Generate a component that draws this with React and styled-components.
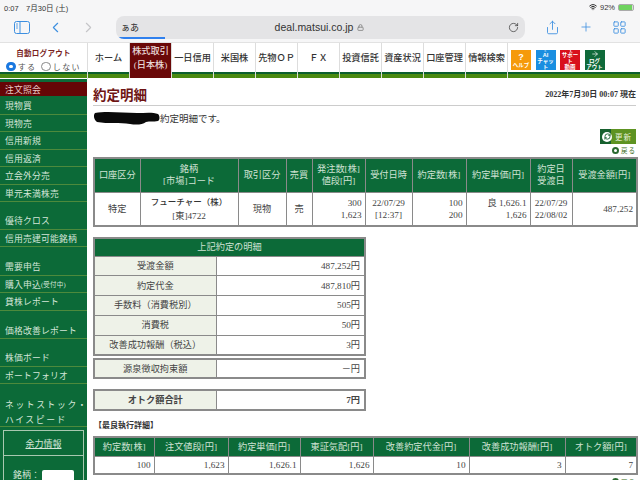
import React from 'react'
import styled, {createGlobalStyle} from 'styled-components'
import {ChevronLeft, ChevronRight, Share, Plus, RotateCw, LayoutGrid, Lock, Wifi, Bot, Play, ArrowRight, RefreshCw} from 'lucide-react'

const SERIF = `"Liberation Serif", "Noto Sans CJK JP", serif`
const SANS = `"Liberation Sans", "Noto Sans CJK JP", sans-serif`

const Global = createGlobalStyle`
  html, body { margin: 0; padding: 0; background: #fff; overflow: hidden; }
  #root { width: 640px; height: 480px; overflow: hidden; }
  * { box-sizing: border-box; }
`
const Screen = styled.div`
  width: 640px;
  height: 480px;
  overflow: hidden;
  display: flex;
  flex-direction: column;
  font-family: ${SERIF};
  color: #333;
`
// browser chrome
const Chrome = styled.div`
  height: 43px;
  flex: none;
  background: #f6f6f7;
  border-bottom: 1px solid #e2e2e2;
  position: relative;
`
const StatusBar = styled.div`
  height: 13px;
  padding: 1px 6px 0 4px;
  display: flex;
  justify-content: space-between;
  align-items: center;
  font: 7.5px ${SANS};
  color: #333;
`
const StatusRight = styled.div`
  display: flex;
  align-items: center;
  gap: 3px;
`
const Battery = styled.span`
  width: 16px;
  height: 7px;
  border-radius: 2px;
  background: linear-gradient(90deg, #6fd35f 92%, #ddd 92%);
  border: 1px solid #aaa;
`
const Toolbar = styled.div`
  height: 24px;
  margin-top: 2px;
  display: flex;
  align-items: center;
`
const ToolIcon = styled.div`
  width: ${props => props.$w}px;
  flex: none;
  display: flex;
  justify-content: center;
  color: ${props => props.$off ? '#c5c5c8' : '#3d8fe0'};
`
const UrlBar = styled.div`
  width: 409px;
  height: 23px;
  flex: none;
  background: #e4e4e6;
  border-radius: 8px;
  margin-left: 6px;
  display: flex;
  align-items: center;
  padding: 0 6px 0 5px;
  position: relative;
  overflow: hidden;
  font: 9px ${SANS};
  color: #222;
`
const UrlText = styled.span`
  flex: 1;
  text-align: center;
  font-size: 10.5px;
  color: #333;
  padding-right: 8px;
  display: flex;
  justify-content: center;
  align-items: center;
  gap: 4px;
`
const Progress = styled.div`
  position: absolute;
  left: 0;
  bottom: 0;
  width: 49px;
  height: 1.5px;
  background: #2f80ee;
`
// site nav
const Nav = styled.div`
  height: 36px;
  flex: none;
  display: flex;
  background: linear-gradient(#fff 0 29px, #0c5f2e 29px 31px, #4a8a10 31px 35px, #fff 35px);
`
const Logout = styled.div`
  width: 88px;
  padding-top: 6px;
  text-align: center;
  border-right: 1px solid #ddd;
`
const LogoutTitle = styled.div`
  font-size: 7.5px;
  font-weight: bold;
  color: #7a1f1f;
  line-height: 9px;
  letter-spacing: .3px;
`
const RadioRow = styled.div`
  display: flex;
  align-items: center;
  justify-content: center;
  gap: 2px;
  margin-top: 3px;
  font-size: 8px;
  color: #555;
  letter-spacing: 1.3px;
`
const Radio = styled.span`
  width: 9.5px;
  height: 9.5px;
  border-radius: 50%;
  background: #fff;
  border: ${props => props.$on ? '3px solid #1a78e0' : '1px solid #888'};
  margin-left: ${props => props.$on ? 0 : 3}px;
`
const NavItem = styled.div`
  width: 42px;
  height: 35px;
  padding: 0 0 6px;
  border-right: 1px solid #ddd;
  display: flex;
  align-items: center;
  justify-content: center;
  text-align: center;
  white-space: nowrap;
  font-size: 9.2px;
  font-weight: 500;
  line-height: 14px;
  color: ${props => props.$active ? '#e8d8d8' : '#333'};
  background: ${props => props.$active ? '#6a0808' : 'transparent'};
`
const MiniButtons = styled.div`
  display: flex;
  gap: 4.5px;
  padding: 7px 0 0 3px;
`
const MiniButton = styled.div`
  width: 20px;
  height: 20px;
  background: ${props => props.$bg};
  color: #fff;
  font: bold 5.5px/6px ${SANS};
  text-align: center;
  display: flex;
  flex-direction: column;
  align-items: center;
  justify-content: center;
`
const HelpMark = styled.span`
  font-size: 9px;
  line-height: 9px;
`
const Body = styled.div`
  flex: 1;
  display: flex;
  min-height: 0;
`
// sidebar
const Side = styled.div`
  width: 87px;
  flex: none;
  background: #0c6a38;
  padding-top: 3px;
`
const SideItem = styled.div`
  height: ${props => props.$h || 17.5}px;
  padding-left: 5px;
  margin-bottom: ${props => props.$gap || 0}px;
  display: flex;
  align-items: center;
  font-size: 8.8px;
  white-space: nowrap;
  letter-spacing: ${props => props.$wide ? 1.6 : .2}px;
  color: ${props => props.$active ? '#e8c8c8' : '#d4e6d8'};
  background: ${props => props.$active ? '#650606' : 'transparent'};
  box-shadow: ${props => props.$plain ? 'none' : 'inset 0 -1px 0 #4d8a3c'};
`
const SmallNote = styled.span`
  font-size: 6.5px;
`
const SideBox = styled.div`
  margin: 3px 3px 0;
  border: 1px solid #a8c8b0;
  color: #d4e6d8;
  font-size: 9px;
`
const SideBoxTitle = styled.div`
  height: 25px;
  display: flex;
  align-items: center;
  justify-content: center;
  text-decoration: underline;
  border-bottom: 1px solid #a8c8b0;
`
const SideBoxRow = styled.div`
  display: flex;
  align-items: flex-start;
  gap: 2px;
  padding: 14px 0 0 9px;
  line-height: 10px;
`
const SideInput = styled.div`
  width: 32px;
  height: 14px;
  background: #fff;
  border-radius: 2px;
`
// main
const Main = styled.div`
  flex: 1;
  padding: 8px 4px 0 6px;
  min-width: 0;
`
const TitleRow = styled.div`
  height: 19px;
  display: flex;
  justify-content: space-between;
  border-bottom: 1.5px solid #ccc;
`
const Title = styled.h1`
  margin: 0;
  font-size: 13.5px;
  line-height: 17px;
  font-weight: bold;
  color: #6e1414;
`
const Stamp = styled.div`
  font-size: 8px;
  font-weight: bold;
  color: #333;
  line-height: 16px;
`
const Message = styled.div`
  height: 23px;
  display: flex;
  align-items: center;
  font-size: 9.5px;
  color: #333;
`
const Blob = styled.svg`
  width: 67px;
  height: 16px;
  flex: none;
`
const Actions = styled.div`
  height: 28px;
  display: flex;
  flex-direction: column;
  align-items: flex-end;
  gap: 1px;
`
const Refresh = styled.div`
  width: 36px;
  height: 15px;
  display: flex;
  align-items: center;
  gap: 3px;
  padding-left: 2px;
  font-size: 7.5px;
  color: #e6efd8;
  letter-spacing: 1px;
  background: linear-gradient(90deg, #17602e 30%, #5e9322 30%);
`
const RefreshDot = styled.span`
  width: 10px;
  height: 10px;
  border-radius: 50%;
  background: #fff;
  color: #17602e;
  display: flex;
  align-items: center;
  justify-content: center;
`
const Back = styled.div`
  display: flex;
  align-items: center;
  gap: 2px;
  font-size: 6.5px;
  color: #3b6d22;
  letter-spacing: 1px;
  margin-top: ${props => props.$mt || 0}px;
  justify-content: flex-end;
`
const BackDot = styled.span`
  width: 7px;
  height: 7px;
  border-radius: 50%;
  border: 2px solid #2a6a30;
`
const Table = styled.table`
  border-collapse: collapse;
  table-layout: fixed;
  width: ${props => props.$w}px;
  border: 2px solid #8a8a8a;
  font-size: 9.2px;
  line-height: 12px;
  margin-bottom: ${props => props.$mb || 0}px;
`
const Th = styled.th`
  background: #0c6a38;
  border: 1.5px solid #8a8a8a;
  color: #cfe2d4;
  font-weight: normal;
  padding: 0;
  height: ${props => props.$h || 34}px;
  white-space: nowrap;
`
const Td = styled.td`
  border: 1.5px solid #8a8a8a;
  padding: 0 ${props => props.$right ? 3 : 0}px 0 0;
  height: ${props => props.$h || 34}px;
  text-align: ${props => props.$right ? 'right' : 'center'};
  color: #444;
  white-space: nowrap;
  background: #fff;
`
const LabelCell = styled.td`
  border: 1.5px solid #8a8a8a;
  background: #eef2e8;
  text-align: center;
  height: ${props => props.$h || 19.8}px;
  padding: 0;
  font-weight: ${props => props.$bold ? 'bold' : 'normal'};
  color: #444;
`
const ValueCell = styled.td`
  border: 1.5px solid #8a8a8a;
  text-align: right;
  padding: 0 4px 0 0;
  font-weight: ${props => props.$bold ? 'bold' : 'normal'};
  color: #444;
`
const Stock = styled.b`
  display: block;
  font-size: 8.5px;
  font-weight: 500;
  color: #333;
  margin-bottom: 2px;
`
const Heading = styled.div`
  font-size: 8px;
  font-weight: bold;
  color: #333;
  line-height: 12px;
  margin-bottom: 4px;
  margin-left: 1px;
`

const topCols = [46, 98, 48, 26, 53, 47, 54, 64, 42, 65]
const bestCols = [60, 74, 72, 73, 96, 96, 72]
const detailCols = [122, 149]
const bestHead = ['約定数[株]', '注文値段[円]', '約定単価[円]', '東証気配[円]', '改善約定代金[円]', '改善成功報酬[円]', 'オトク額[円]']
const bestRow = ['100', '1,623', '1,626.1', '1,626', '10', '3', '7']
const detailRows = [
  ['受渡金額', '487,252'],
  ['約定代金', '487,810'],
  ['手数料（消費税別）', '505'],
  ['消費税', '50'],
  ['改善成功報酬（税込）', '3'],
]

function Cols({widths}) {
  return <colgroup>{widths.map((w, i) => <col key={i} style={{width: w}}/>)}</colgroup>
}

function Sidebar() {
  return (
    <Side>
      <SideItem $active $plain $h={14} $gap={1}>注文照会</SideItem>
      <SideItem>現物買</SideItem>
      <SideItem>現物売</SideItem>
      <SideItem>信用新規</SideItem>
      <SideItem>信用返済</SideItem>
      <SideItem>立会外分売</SideItem>
      <SideItem $gap={10}>単元未満株売</SideItem>
      <SideItem>優待クロス</SideItem>
      <SideItem $gap={11}>信用売建可能銘柄</SideItem>
      <SideItem>需要申告</SideItem>
      <SideItem>購入申込<SmallNote>(受付中)</SmallNote></SideItem>
      <SideItem $gap={11}>貸株レポート</SideItem>
      <SideItem $gap={10}>価格改善レポート</SideItem>
      <SideItem>株価ボード</SideItem>
      <SideItem $gap={13}>ポートフォリオ</SideItem>
      <SideItem $wide $plain $h={15}>ネットストック・</SideItem>
      <SideItem $wide $h={15}>ハイスピード</SideItem>
      <SideBox>
        <SideBoxTitle>余力情報</SideBoxTitle>
        <SideBoxRow>銘柄：<SideInput/></SideBoxRow>
      </SideBox>
    </Side>
  )
}

export default function App() {
  return (
    <Screen>
      <Global/>
      <Chrome>
        <StatusBar>
          <span>0:07　7月30日 (土)</span>
          <StatusRight>
            <Wifi size={8} strokeWidth={3}/>
            <span>92%</span>
            <Battery/>
          </StatusRight>
        </StatusBar>
        <Toolbar>
          <ToolIcon $w={44}>
            <svg width="16" height="13" viewBox="0 0 16 13" fill="none" stroke="#3d8fe0" strokeWidth="1">
              <rect x=".5" y=".5" width="15" height="12" rx="2"/>
              <path d="M6 .5v12"/>
              <path d="M2 3h2M2 5h2M2 7h2" strokeWidth=".8"/>
            </svg>
          </ToolIcon>
          <ToolIcon $w={22}><ChevronLeft size={17} strokeWidth={1.6}/></ToolIcon>
          <ToolIcon $w={44} $off><ChevronRight size={17} strokeWidth={1.6}/></ToolIcon>
          <UrlBar>
            <span>ぁあ</span>
            <UrlText>deal.matsui.co.jp <Lock size={7} strokeWidth={3} color="#888"/></UrlText>
            <RotateCw size={11} strokeWidth={1.5} color="#333"/>
            <Progress/>
          </UrlBar>
          <ToolIcon $w={54}><Share size={15} strokeWidth={1.4}/></ToolIcon>
          <ToolIcon $w={14}><Plus size={16} strokeWidth={1.4}/></ToolIcon>
          <ToolIcon $w={52}><LayoutGrid size={15} strokeWidth={1.4}/></ToolIcon>
        </Toolbar>
      </Chrome>
      <Nav>
        <Logout>
          <LogoutTitle>自動ログアウト</LogoutTitle>
          <RadioRow><Radio $on/>する<Radio/>しない</RadioRow>
        </Logout>
        <NavItem>ホーム</NavItem>
        <NavItem $active>株式取引<br/>(日本株)</NavItem>
        <NavItem>一日信用</NavItem>
        <NavItem>米国株</NavItem>
        <NavItem>先物ＯＰ</NavItem>
        <NavItem>ＦＸ</NavItem>
        <NavItem>投資信託</NavItem>
        <NavItem>資産状況</NavItem>
        <NavItem>口座管理</NavItem>
        <NavItem>情報検索</NavItem>
        <MiniButtons>
          <MiniButton $bg="#f59a0c"><HelpMark>?</HelpMark>ヘルプ</MiniButton>
          <MiniButton $bg="#1a8ee0"><Bot size={7}/>AI<br/>チャット</MiniButton>
          <MiniButton $bg="#d8101c"><Play size={5} fill="#fff"/>サポート<br/>動画</MiniButton>
          <MiniButton $bg="#0f6a3a"><ArrowRight size={8}/>ログ<br/>アウト</MiniButton>
        </MiniButtons>
      </Nav>
      <Body>
        <Sidebar/>
        <Main>
          <TitleRow>
            <Title>約定明細</Title>
            <Stamp>2022年7月30日 00:07 現在</Stamp>
          </TitleRow>
          <Message>
            <Blob viewBox="0 0 67 16">
              <path d="M2 3C14 1 30 3 44 3c8 0 16-1 21 1 2 2 2 6 0 7-5 1-8 0-12 1-4 3-10 3-16 2-10-2-22 0-33-2C1 10 0 5 2 3z" fill="#0a0a0a"/>
            </Blob>
            約定明細です。
          </Message>
          <Actions>
            <Refresh>
              <RefreshDot><RefreshCw size={7} strokeWidth={3}/></RefreshDot>更新
            </Refresh>
            <Back><BackDot/>戻る</Back>
          </Actions>
          <Table $w={543} $mb={10}>
            <Cols widths={topCols}/>
            <thead>
              <tr>
                <Th>口座区分</Th>
                <Th>銘柄<br/>[市場]コード</Th>
                <Th>取引区分</Th>
                <Th>売買</Th>
                <Th>発注数[株]<br/>値段[円]</Th>
                <Th>受付日時</Th>
                <Th>約定数[株]</Th>
                <Th>約定単価[円]</Th>
                <Th>約定日<br/>受渡日</Th>
                <Th>受渡金額[円]</Th>
              </tr>
            </thead>
            <tbody>
              <tr>
                <Td>特定</Td>
                <Td><Stock>フューチャー（株）</Stock>[東]4722</Td>
                <Td>現物</Td>
                <Td>売</Td>
                <Td $right>300<br/>1,623</Td>
                <Td>22/07/29<br/>[12:37]</Td>
                <Td $right>100<br/>200</Td>
                <Td $right>良 1,626.1<br/>1,626</Td>
                <Td>22/07/29<br/>22/08/02</Td>
                <Td $right>487,252</Td>
              </tr>
            </tbody>
          </Table>
          <Table $w={271} $mb={2}>
            <Cols widths={detailCols}/>
            <thead>
              <tr><Th colSpan={2} $h={18}>上記約定の明細</Th></tr>
            </thead>
            <tbody>
              {detailRows.map(row => (
                <tr key={row[0]}>
                  <LabelCell>{row[0]}</LabelCell>
                  <ValueCell>{row[1]}円</ValueCell>
                </tr>
              ))}
            </tbody>
          </Table>
          <Table $w={271} $mb={10}>
            <Cols widths={detailCols}/>
            <tbody>
              <tr>
                <LabelCell $h={19.5}>源泉徴収拘束額</LabelCell>
                <ValueCell>－円</ValueCell>
              </tr>
            </tbody>
          </Table>
          <Table $w={271} $mb={9}>
            <Cols widths={detailCols}/>
            <tbody>
              <tr>
                <LabelCell $bold $h={19.5}>オトク額合計</LabelCell>
                <ValueCell $bold>7円</ValueCell>
              </tr>
            </tbody>
          </Table>
          <Heading>【最良執行詳細】</Heading>
          <Table $w={543}>
            <Cols widths={bestCols}/>
            <thead>
              <tr>{bestHead.map(h => <Th key={h} $h={20}>{h}</Th>)}</tr>
            </thead>
            <tbody>
              <tr>{bestRow.map((v, i) => <Td key={i} $right $h={17}>{v}</Td>)}</tr>
            </tbody>
          </Table>
          <Back $mt={2}><BackDot/>戻る</Back>
        </Main>
      </Body>
    </Screen>
  )
}
